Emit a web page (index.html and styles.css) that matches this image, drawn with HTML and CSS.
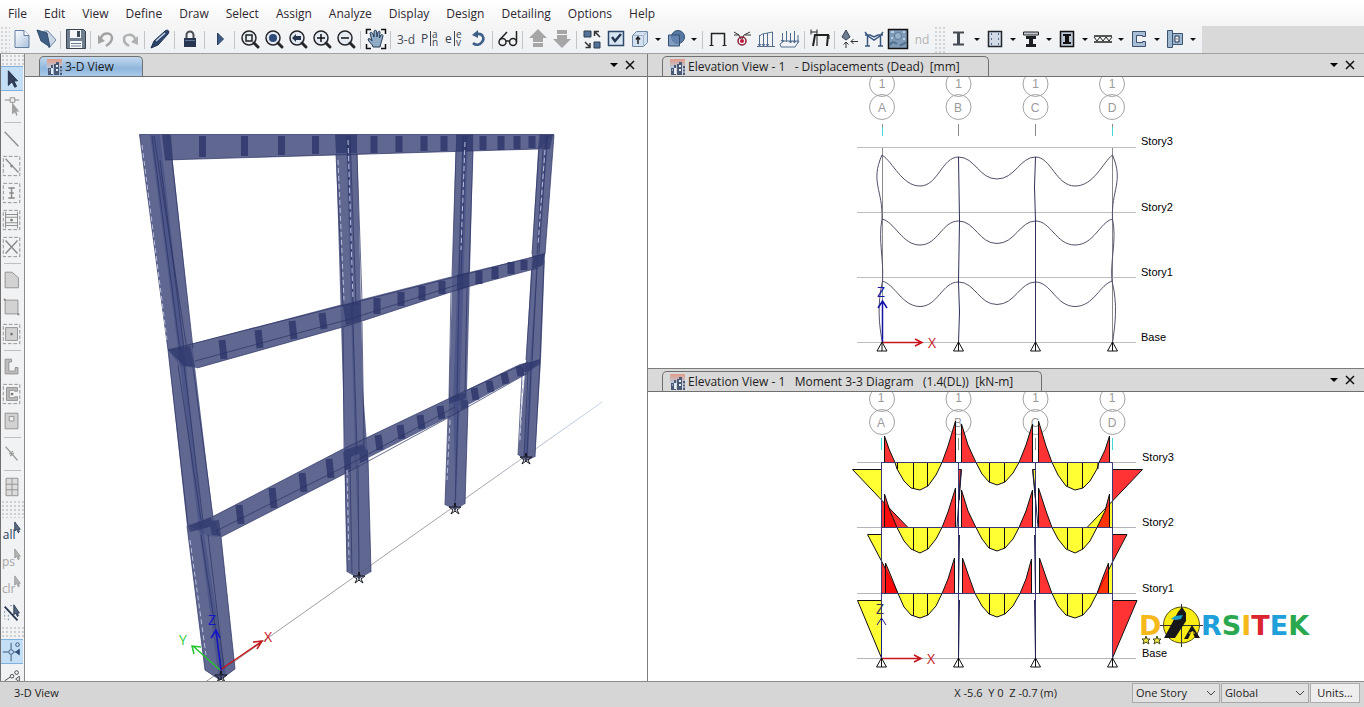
FILE: index.html
```html
<!DOCTYPE html>
<html lang="en">
<head>
<meta charset="utf-8">
<title>3-D View</title>
<link rel="stylesheet" href="styles.css">
</head>
<body>
<div class="app">
<nav class="menu" aria-label="Main menu">
  <button>File</button><button>Edit</button><button>View</button><button>Define</button><button>Draw</button><button>Select</button><button>Assign</button><button>Analyze</button><button>Display</button><button>Design</button><button>Detailing</button><button>Options</button><button>Help</button>
</nav>

<div class="toolbar-row">
<div class="toolbar" role="toolbar" aria-label="Tools">
  <span class="grip"></span>
  <button class="tool" aria-label="New"><svg viewBox="0 0 24 24"><path d="M5 3.500h9l5 5V20.500H5z" fill="url(#paper)" stroke="#64809f"/><path d="M14 3.500v5h5" fill="#fff" stroke="#64809f"/></svg></button>
  <button class="tool" aria-label="Open"><svg viewBox="0 0 24 24"><path d="M10 4l4 0 8 9-7 8z" fill="#c9d6e6" stroke="#7388a2"/><path d="M3 3l10 3 3 14-9-6z" fill="#3f5f86" stroke="#334c6e"/></svg></button>
  <i class="sep"></i>
  <button class="tool" aria-label="Save"><svg viewBox="0 0 24 24"><path d="M2.500 2.500h17l2 2v17h-19z" fill="#6f7f90" stroke="#39434f"/><path d="M6 3h11v8H6z" fill="#f5f7fa"/><path d="M13 4h3v6h-3z" fill="#3d4a58"/><path d="M6 14h12v7H6z" fill="#f5f7fa"/><path d="M7 16.500h10M7 19h10" stroke="#6f7f90"/></svg></button>
  <i class="sep"></i>
  <button class="tool" aria-label="Undo"><svg viewBox="0 0 24 24"><path d="M7 11C9 5 18 5 18 11c0 4-3 6-6 8" fill="none" stroke="#a3a3a3" stroke-width="2.500"/><path d="M4 8v9l7-3z" fill="#a3a3a3"/></svg></button>
  <button class="tool" aria-label="Redo"><svg viewBox="0 0 24 24"><path d="M17 12C15 6 6 7 6 12c0 4 2 5 5 7" fill="none" stroke="#b0b0b0" stroke-width="2.500"/><path d="M20 9v9l-7-3z" fill="#b0b0b0"/></svg></button>
  <i class="sep"></i>
  <button class="tool" aria-label="Refresh drawing"><svg viewBox="0 0 24 24"><path d="M3 21l3-7L17 4c3-2 5 0 3 3L10 18z" fill="#2c456b" stroke="#1e2f4b"/><path d="M8 14L17 6" stroke="#c6d6e8" stroke-width="1.500"/></svg></button>
  <i class="sep"></i>
  <button class="tool" aria-label="Lock model"><svg viewBox="0 0 24 24"><path d="M8.500 12V8a3.500 3.500 0 0 1 7 0v4" fill="none" stroke="#4b4f56" stroke-width="2"/><rect x="6" y="11" width="12" height="9" fill="#26364f"/><path d="M7 13.500h10" stroke="#62789a"/></svg></button>
  <i class="sep"></i>
  <button class="tool" aria-label="Run analysis"><svg viewBox="0 0 24 24"><path d="M9.500 6v12l6-6z" fill="#3c5a83" stroke="#2a3f60"/></svg></button>
  <i class="sep"></i>
  <button class="tool" aria-label="Rubber band zoom"><svg viewBox="0 0 24 24"><circle cx="11" cy="11" r="7" class="lens"/><path d="M16 16l4 4" class="handle"/><rect x="8" y="8" width="6" height="6" fill="none" stroke="#222" stroke-width="1.500"/></svg></button>
  <button class="tool" aria-label="Restore full view"><svg viewBox="0 0 24 24"><circle cx="11" cy="11" r="7" class="lens"/><path d="M16 16l4 4" class="handle"/><circle cx="11" cy="11" r="4" fill="#2d4b76"/></svg></button>
  <button class="tool" aria-label="Previous zoom"><svg viewBox="0 0 24 24"><circle cx="11" cy="11" r="7" class="lens"/><path d="M16 16l4 4" class="handle"/><path d="M6 11l4-4v2h5v4h-5v2z" fill="#26364f"/></svg></button>
  <button class="tool" aria-label="Zoom in"><svg viewBox="0 0 24 24"><circle cx="11" cy="11" r="7" class="lens"/><path d="M16 16l4 4" class="handle"/><path d="M7 11h8M11 7v8" stroke="#111" stroke-width="1.500"/></svg></button>
  <button class="tool" aria-label="Zoom out"><svg viewBox="0 0 24 24"><circle cx="11" cy="11" r="7" class="lens"/><path d="M16 16l4 4" class="handle"/><path d="M7 11h8" stroke="#111" stroke-width="1.500"/></svg></button>
  <i class="sep"></i>
  <button class="tool" aria-label="Pan"><svg viewBox="0 0 24 24"><path d="M2.500 7V2.500H7M17 2.500h4.500V7M21.500 17v4.500H17M7 21.500H2.500V17" fill="none" stroke="#111" stroke-width="1.500"/><path d="M9 20c0-3-5-5-5-8 1-1 3 0 4 2L6 6c1-1 2-1 3 1l1 3V4c1-1 2-1 2.500 0l.5 6 1-5c1-1 2-1 2 0l-.5 6 1.500-3c1-1 2 0 2 1l-2 7-1 4z" fill="#8eabc8" stroke="#293b52"/></svg></button>
  <i class="sep"></i>
  <button class="tool word">3-d</button>
  <button class="tool" aria-label="Plan view"><svg viewBox="0 0 24 24" class="glyph"><path d="M12.500 4v15"/><text x="3" y="16" font-size="12">P<tspan x="14" y="11" font-size="10">a</tspan><tspan x="14" y="19" font-size="10">n</tspan></text></svg></button>
  <button class="tool" aria-label="Elevation view"><svg viewBox="0 0 24 24" class="glyph"><path d="M12.500 4v15"/><text x="3" y="16" font-size="12">e<tspan x="14" y="11" font-size="10">e</tspan><tspan x="14" y="19" font-size="10">v</tspan></text></svg></button>
  <button class="tool" aria-label="Rotate"><svg viewBox="0 0 24 24"><path d="M11 7c6-1 8 5 5 8-2 3-6 4-9 1" fill="none" stroke="#3d5f88" stroke-width="2.500"/><path d="M12 3v8L6 8z" fill="#3d5f88"/></svg></button>
  <i class="sep"></i>
  <button class="tool" aria-label="Object view options"><svg viewBox="0 0 24 24" fill="none" stroke="#222" stroke-width="1.500"><circle cx="6.500" cy="15" r="3.500"/><circle cx="17" cy="15" r="3.500"/><path d="M10 14h4M3.500 13L11 5M20.500 15V4"/></svg></button>
  <i class="sep"></i>
  <button class="tool" aria-label="Move up"><svg viewBox="0 0 24 24" fill="#a6a6a6"><path d="M12 2l9 9H3zM7 11h10v4H7zM7 16h10v4H7z"/></svg></button>
  <button class="tool" aria-label="Move down"><svg viewBox="0 0 24 24" fill="#a6a6a6"><path d="M12 21l9-9H3zM7 8h10v4H7zM7 3h10v4H7z"/></svg></button>
  <i class="sep"></i>
  <button class="tool" aria-label="Shrink objects"><svg viewBox="0 0 24 24"><path d="M4 4h7v6H4zM14 15h6v6h-6z" fill="#537298" stroke="#2d3c52"/><path d="M20 10l-5-5M14.500 9V4.500H19M5 15l5 5M5.500 20.500H10V16" fill="none" stroke="#333" stroke-width="1.500"/></svg></button>
  <button class="tool" aria-label="Set display options"><svg viewBox="0 0 24 24"><rect x="4.500" y="4.500" width="15" height="14" fill="#d7e5f3" stroke="#2f4869" stroke-width="1.500"/><path d="M8 10l3 4 6-7" fill="none" stroke="#26364f" stroke-width="2.500"/></svg></button>
  <button class="tool" aria-label="Assign display"><svg viewBox="0 0 24 24"><path d="M4.500 8.500l4-4h11v11l-4 4h-11z" fill="#d3e0ef" stroke="#6e87a5"/><path d="M4.500 8.500h11v11M15.500 8.500l4-4" fill="none" stroke="#9fb3ca"/><path d="M10 17V10M8 12.500L10 10l2 2.500" fill="none" stroke="#222" stroke-width="1.500"/></svg></button>
  <button class="drop" aria-label="More display"></button>
  <button class="tool" aria-label="Object fill"><svg viewBox="0 0 24 24"><circle cx="14" cy="10" r="6.500" fill="#5879a3" stroke="#334f74"/><path d="M4.500 8h11v11h-11z" fill="#6687b0" stroke="#334f74" fill-opacity=".8"/></svg></button>
  <button class="drop" aria-label="More fill"></button>
  <i class="sep"></i>
  <button class="tool" aria-label="Undeformed shape"><svg viewBox="0 0 24 24" fill="none" stroke="#222"><path d="M5.500 18V6.500h13V18" stroke-width="1.500"/><path d="M3.500 18.500h4M16.500 18.500h4"/></svg></button>
  <button class="tool" aria-label="Joint reactions"><svg viewBox="0 0 24 24"><path d="M4 5l5 3 2 4M20 5l-6 3-2 4M4 8h5M15 8h6" fill="none" stroke="#333"/><circle cx="12" cy="14" r="4" fill="none" stroke="#8b1d34" stroke-width="1.500"/><circle cx="12" cy="14" r="2" fill="#c4163c"/></svg></button>
  <button class="tool" aria-label="Frame loads"><svg viewBox="0 0 24 24" fill="none" stroke="#526c8e"><path d="M3 19.500h18M5.500 8v11M9.500 7v12M13.500 6v13M18.500 5v14M5.500 9l3-2 5-1 5-1M4 17l1.500 2 1.500-2M8 17l1.500 2 1.500-2M12 17l1.500 2 1.500-2"/></svg></button>
  <button class="tool" aria-label="Shell loads"><svg viewBox="0 0 24 24" fill="none" stroke="#526c8e"><path d="M2 17l4-3h15l-4 6H3zM4.500 6v9M8.500 4v11M12.500 6v10M16.500 4v12M20 8v8M3 13l1.500 2L6 13M11 14l1.500 2 1.500-2M15 14l1.500 2 1.500-2"/></svg></button>
  <i class="sep"></i>
  <button class="tool" aria-label="Deformed shape"><svg viewBox="0 0 24 24" fill="none" stroke="#222"><path d="M5 19L7 8h13l-1 11" stroke-width="2"/><path d="M3 2.500v5M9 2.500v5M3 5h6M9 8v11M21 8v4"/></svg></button>
  <i class="sep"></i>
  <button class="tool" aria-label="Joint loads"><svg viewBox="0 0 24 24"><path d="M8 3l4 7-4 3-4-3z" fill="#6c7f94" stroke="#39434f"/><path d="M8 21v-6M5.500 17.500L8 15l2.500 2.500M20 14.500h-7M15.500 12L13 14.500l2.500 2.500" fill="none" stroke="#333"/></svg></button>
  <button class="tool" aria-label="Force diagrams"><svg viewBox="0 0 24 24" fill="none" stroke="#3a587f" stroke-width="1.500"><path d="M5.500 19V8M18.500 19V8M3 5l3 4 6 4 6-4 3-4M3 19h5M16 19h5M3 8h5l4 2 4-2h5"/></svg></button>
  <button class="tool" aria-label="Shell forces"><svg viewBox="0 0 24 24"><rect x="2.500" y="2.500" width="19" height="19" fill="#7f9ab6" stroke="#111" stroke-width="1.500"/><path d="M4 18c2-4 5-3 7-1M14 19c2-3 4-1 6-4" stroke="#50708f" stroke-width="2" fill="none"/><circle cx="12" cy="9" r="3.500" fill="#98b2cb" stroke="#5c7b99"/><path d="M5 5h3M17 5h2M5 11h2M17 12h2" stroke="#bdd0e2" stroke-width="2"/></svg></button>
  <button class="tool word off">nd</button>
  <span class="grip wide"></span>
  <button class="tool" aria-label="Steel frame design"><svg viewBox="0 0 24 24"><path d="M6 4.500h11v2h-4v10h4v2H6v-2h4v-10H6z" fill="#454b53"/></svg></button>
  <button class="drop" aria-label="More steel"></button>
  <button class="tool" aria-label="Concrete frame design"><svg viewBox="0 0 24 24"><rect x="5.500" y="4.500" width="13" height="15" fill="#d3dbe8" stroke="#22262d" stroke-width="1.500"/><path d="M8 7h1M15 7h1M8 17h1M15 17h1M8 12h1M15 12h1" stroke="#2d4b76" stroke-width="1.500"/></svg></button>
  <button class="drop" aria-label="More concrete"></button>
  <button class="tool" aria-label="Composite beam design"><svg viewBox="0 0 24 24"><path d="M4.500 5h15v3h-15z" fill="#c5ccd5" stroke="#222"/><path d="M7 9h10v3h-3v5h3v3H7v-3h3v-5H7z" fill="#1c1f24"/></svg></button>
  <button class="drop" aria-label="More composite beam"></button>
  <button class="tool" aria-label="Composite column design"><svg viewBox="0 0 24 24"><rect x="5.500" y="4.500" width="13" height="15" fill="#b9c5d4" stroke="#111" stroke-width="1.500"/><path d="M8 7h8v2h-2v6h2v2H8v-2h2V9H8z" fill="#111"/></svg></button>
  <button class="drop" aria-label="More composite column"></button>
  <button class="tool" aria-label="Steel joist design"><svg viewBox="0 0 24 24" fill="none" stroke="#222"><path d="M3 9h18M3 15h18" stroke-width="1.500"/><path d="M3 10l3 4 3-4 3 4 3-4 3 4 3-4"/></svg></button>
  <button class="drop" aria-label="More joist"></button>
  <button class="tool" aria-label="Shear wall design"><svg viewBox="0 0 24 24"><path d="M5.500 4.500h13v5h-3v-1h-6v7h6v-1h3v5h-13z" fill="#a9bed5" stroke="#3c5370"/></svg></button>
  <button class="drop" aria-label="More wall"></button>
  <button class="tool" aria-label="Concrete slab design"><svg viewBox="0 0 24 24"><path d="M4.500 3.500h5v17h-5z" fill="#9fb8d2" stroke="#3c5370"/><path d="M9.500 6.500h10v11h-10z" fill="#9fb8d2" stroke="#3c5370"/><path d="M12 9h4v6h-4z" fill="#eef3f9" stroke="#24354c"/><path d="M13.500 12h1" stroke="#111"/></svg></button>
  <button class="drop" aria-label="More slab"></button>
</div>
</div>

<div class="work">
<div class="side" role="toolbar" aria-label="Draw and select">
  <span class="hgrip"></span>
  <button class="stool on" aria-label="Select pointer"><svg viewBox="0 0 24 24"><path d="M8 3v16l4-4 3 6 2-1-3-6h4z" fill="#34415c" stroke="#1f2a40"/></svg></button>
  <button class="stool" aria-label="Reshape"><svg viewBox="0 0 24 24"><path d="M4 5.500h16" stroke="#a8a8a8" stroke-width="1.500"/><path d="M10 3h5v5h-5z" fill="#eee" stroke="#8c8c8c"/><path d="M12 8v13l3-2 2 4 1-1-1-4h3z" fill="#a2a2a2"/></svg></button>
  <i class="hsep"></i>
  <button class="stool" aria-label="Draw line"><svg viewBox="0 0 24 24"><path d="M4 4l15 16" stroke="#8f8f8f" stroke-width="1.500"/></svg></button>
  <button class="stool" aria-label="Quick draw line"><svg viewBox="0 0 24 24"><rect x="2.500" y="1.500" width="18" height="21" class="dash"/><path d="M5 4l14 15" stroke="#8f8f8f" stroke-width="1.500"/><circle cx="11.500" cy="12" r="1.500" fill="#888"/></svg></button>
  <button class="stool" aria-label="Quick draw columns"><svg viewBox="0 0 24 24"><rect x="2.500" y="1.500" width="18" height="21" class="dash"/><path d="M8 6.500h7M8 17.500h7M11.500 6v12M9 12h5" stroke="#888" stroke-width="1.500"/></svg></button>
  <button class="stool" aria-label="Quick draw beams"><svg viewBox="0 0 24 24"><rect x="2.500" y="1.500" width="18" height="21" class="dash"/><path d="M5 3v18M18 3v18M5 6h13M5 9h13M5 15h13M5 18h13" stroke="#888"/><circle cx="11.500" cy="12" r="1.500" fill="#777"/></svg></button>
  <button class="stool" aria-label="Quick draw braces"><svg viewBox="0 0 24 24"><rect x="2.500" y="1.500" width="18" height="21" class="dash"/><path d="M5 5l13 14M18 5L5 19" stroke="#888" stroke-width="1.500"/></svg></button>
  <i class="hsep"></i>
  <button class="stool" aria-label="Draw floor"><svg viewBox="0 0 24 24"><path d="M4.500 3.500H12l7 6v11H4.500z" fill="#d2d2d2" stroke="#8f8f8f"/></svg></button>
  <button class="stool" aria-label="Draw rectangular floor"><svg viewBox="0 0 24 24"><path d="M4.500 4.500h14v15h-14z" fill="#d2d2d2" stroke="#8f8f8f"/><path d="M3 3h2v2H3zM18 19h2v2h-2z" fill="#777"/></svg></button>
  <button class="stool" aria-label="Quick draw floor"><svg viewBox="0 0 24 24"><rect x="2.500" y="1.500" width="18" height="21" class="dash"/><path d="M5 5h13v14H5z" fill="#d2d2d2" stroke="#8f8f8f"/><circle cx="11.500" cy="12" r="1.500" fill="#777"/></svg></button>
  <i class="hsep"></i>
  <button class="stool" aria-label="Draw walls"><svg viewBox="0 0 24 24"><path d="M4.500 3.500h7v3h-3v10h7v-4h3v7h-14z" fill="#bdbdbd" stroke="#8f8f8f"/></svg></button>
  <button class="stool" aria-label="Quick draw walls"><svg viewBox="0 0 24 24"><rect x="2.500" y="1.500" width="18" height="21" class="dash"/><path d="M6 5h12v4h-3V8H9v8h6v-1h3v4H6z" fill="#bdbdbd" stroke="#8f8f8f"/><circle cx="12" cy="12" r="1.500" fill="#777"/></svg></button>
  <button class="stool" aria-label="Draw wall openings"><svg viewBox="0 0 24 24"><path d="M4.500 3.500h14v17h-14z" fill="#d2d2d2" stroke="#8f8f8f"/><path d="M9 7h5v5H9z" fill="#eee" stroke="#8f8f8f"/></svg></button>
  <i class="hsep"></i>
  <button class="stool" aria-label="Draw links"><svg viewBox="0 0 24 24"><path d="M5 4l13 15M9 12l4-3M10 14l4-3" stroke="#9a9a9a" stroke-width="1.500" fill="none"/></svg></button>
  <i class="hsep"></i>
  <button class="stool" aria-label="Draw grid"><svg viewBox="0 0 24 24"><path d="M5.500 2.500h13v19h-13zM5.500 9h13M5.500 15h13M12 3v18" fill="#dcdcdc" stroke="#8f8f8f"/></svg></button>
  <span class="hgrip tall"></span>
  <button class="stool" aria-label="Select all"><svg viewBox="0 0 24 24"><text x="2" y="20" font-size="13" fill="#26415f">all</text><path d="M15 1v10l2-2 2 4 1-1-1-3h2z" fill="#5b6b80" stroke="#33435a"/></svg></button>
  <button class="stool" aria-label="Previous selection"><svg viewBox="0 0 24 24"><text x="1" y="20" font-size="13" fill="#a5a5a5">ps</text><path d="M15 1v10l2-2 2 4 1-1-1-3h2z" fill="#b4b4b4" stroke="#999"/></svg></button>
  <button class="stool" aria-label="Clear selection"><svg viewBox="0 0 24 24"><text x="1" y="20" font-size="13" fill="#a5a5a5">clr</text><path d="M15 1v10l2-2 2 4 1-1-1-3h2z" fill="#b4b4b4" stroke="#999"/></svg></button>
  <button class="stool" aria-label="Intersecting line selection"><svg viewBox="0 0 24 24"><path d="M4 5l14 15" stroke="#26364f" stroke-width="2"/><path d="M4 10v9M8 14v6M10 4h4" stroke="#6b8bb3" stroke-dasharray="2 2"/><path d="M14 3v11l2-2 2 4 1-1-1-3h2z" fill="#52647c" stroke="#26364f"/></svg></button>
  <span class="hgrip short"></span>
  <button class="stool on" aria-label="Snap to joints"><svg viewBox="0 0 24 24" fill="none" stroke="#2f4f77"><path d="M11 2v7M11 15v7M2 12h6M14 12h3"/><circle cx="11" cy="12" r="2.500"/><circle cx="18" cy="4" r="2"/><path d="M20 9v6l-4-3z" fill="#2f4f77"/></svg></button>
  <button class="stool" aria-label="Snap to ends"><svg viewBox="0 0 24 24" fill="none" stroke="#444"><circle cx="17" cy="5" r="2"/><circle cx="12" cy="9" r="2"/><path d="M4 14l6-4M20 9v6l-4-3z"/></svg></button>
</div>

<main class="panes">
<section class="pane main-view">
  <header class="strip">
    <h2 class="tab active"><svg class="tabicon" viewBox="0 0 16 16"><use href="#tabmark"/></svg>3-D View</h2>
    <span class="ctl"><button aria-label="Window list"><svg viewBox="0 0 16 16"><path d="M4 6h8l-4 4z"/></svg></button><button aria-label="Close"><svg viewBox="0 0 16 16"><path d="M4 4l8 8M12 4l-8 8" stroke="#111" stroke-width="1.500"/></svg></button></span>
  </header>
  <svg class="view" viewBox="25 77 622 604" role="img" aria-label="3-D frame model">
    <defs>
      <linearGradient id="paper" x1="0" y1="0" x2="1" y2="1"><stop offset="0" stop-color="#fff"/><stop offset="1" stop-color="#a9c0dc"/></linearGradient>
      <linearGradient id="fade" gradientUnits="userSpaceOnUse" x1="220" y1="670" x2="602" y2="402"><stop offset="0" stop-color="#9a9a9a"/><stop offset=".7" stop-color="#a6a6b4"/><stop offset="1" stop-color="#c3d8f0"/></linearGradient>
      <linearGradient id="sky" x1="0" y1="0" x2="0" y2="1"><stop offset="0" stop-color="#e39b86"/><stop offset="1" stop-color="#b9cbe0"/></linearGradient>
      <g id="tabmark"><path d="M0 0h15v9H0z" fill="url(#sky)"/><path d="M1 9h3V6h2v10H1zM7 5h2V3h3v13H7zM13 7h2v9h-2z" fill="#4a5a76"/><path d="M4 9h2v6H4zM9 6h2v2H9zM9 10h2v2H9z" fill="#e6edf5"/><path d="M2 11h1M13 10h2M13 13h2" stroke="#dfe8f2"/></g>
      <path id="star" d="M0-5L1-1 6-1 2 2 4 6 0 3-4 6-2 2-6-1-1-1zM0-5v9" fill="none" stroke="#15151f"/>
      <g id="pin"><path d="M0 0l-5 9h10zM0 0v9" fill="none" stroke="#111"/></g>
    </defs>
    <path d="M204 683L602 402" stroke="url(#fade)" fill="none"/>
    <g class="steel">
      <path d="M139.500 134.500H170L193 350 213 517 221 536 235 669 220 680 205 670 187 526 168 350z"/>
      <path d="M335.500 134.500H357L363 390 368 457 371 572 359 579 347 572 343 390z"/>
      <path d="M456 134.500H473.500L467 390 468 407 465 504 455 510 445 505 449 398z"/>
      <path d="M539 134.500H554L545 254 541 360 535 457 526 461 518 455 526 360 532 253z"/>
      <path d="M162 134.500H554L538 149 165 160z"/>
      <path d="M168 350L343 304 457 275 545 254 541 267 463 288 350 325 197 368 180 366z"/>
      <path d="M188 525L212 517 343 449 450 398 520 364 540 360 528 373 468 405 457 413 368 458 352 470 221 537 208 536z"/>
    </g>
    <g class="flange">
      <path d="M150 135L178 348 198 521 219 680 226 674 202 521 184 348 160 135z"/>
      <path d="M346 135h4L355 390 360 578 355 450z"/>
      <path d="M463 135h5L460 390 456 508 453 400z"/>
      <path d="M545 135h4L538 254 528 458 524 456z"/>
    </g>
    <g class="joint">
      <path d="M168 350L190 346 195 367 184 366zM188 526l23-9 2 9-23 6zM209 521l10-1 2 16-9-1z"/>
      <path d="M344 450l20-6 2 7-21 8zM359 448l9 2v10l-8 3zM343 452h8v16l-6 3zM449 398l17-6v6l-17 6zM460 398l8 3v6l-7 3zM523 364l17-5v5l-12 8h-6zM343 305l18-4v20l-15 4zM457 275l12-3v15l-12 4zM533 256l12-3-2 12-11 4z"/>
      <path d="M335 135h22v18h-21zM456 135h17v16h-17zM540 135h13l-3 14h-12zM162 135h9l2 25h-8z"/>
    </g>
    <g class="web"><path d="M202.500 136v21M244.500 136v20M281.500 136v19M315.500 136v18M374 136v17M399 136v16M424 136v15M444 136v15M483 136v14M501 136v14M517 136v13M532 136v12"/><path d="M222 340l2 19M258 330l2 18M292 321l2 18M322 313l2 16M377 298v16M401 292v14M422 286v14M442 281v13M479 271v13M495 267v12M511 262v12M524 260v10"/><path d="M239 505l2 19M272 488l2 20M302 473l2 19M329 459l2 19M378 435l2 15M400 425l2 14M420 415l2 14M440 406l2 13M474 388l2 12M489 381l2 11M504 373l2 11M519 366l2 10"/></g>
    <g class="edge">
      <path d="M139.500 134.500H554M165 160L538 149M168 350L545 254M197 368L350 325 463 288 538 268M195 361L350 319 463 283M212 517L343 449 450 398 528 362M221 537L352 470 457 413 528 373M216 531L350 464 455 407"/>
      <path d="M139.500 134.500L168 350M172 160L193 348M154 136L187 350M152 136L180 350M160 160L184 348M168 350L188 526M193 367L213 517M178 365L201 520M184 365L203 521M187 526L205 670 220 680 235 669 221 537M201 535L222 672M208 535L224 669"/>
      <path d="M336 154L343 307M357 154L362 300M347 136L353 305M350 136L356 305M343 328L344 448M362 322L364 444M353 325L357 448M345 466L347 572M368 458L371 572M358 465L359 575M350 467L352 573"/>
      <path d="M456 151L452 276M473 151L469 272M463 136L459 276M466 136L461 276M451 292L449 398M467 288L465 392M459 290L457 398M448 416L445 505M468 405L465 504M458 410L455 505"/>
      <path d="M539 149L532 254M554 135L545 254M547 136L539 254M543 149L537 254M532 270L526 360M544 260L540 360M537 268L532 360M522 376L518 455M540 360L535 457M531 370L527 456M528 372L524 456"/>
    </g>
    <g class="hidden"><path d="M142 145L167 340M190 540L206 655M338 160L344 300M348 140L353 300M347 470L349 560M465 142L461 250M545 150L538 245M450 420L447 480M523 380L520 440"/></g>
    <use href="#star" x="359" y="577"/><use href="#star" x="455" y="508"/><use href="#star" x="526" y="458"/><use href="#star" x="221" y="676"/>
    <g fill="none" stroke-width="1.500">
      <path d="M220 670L261 642M253 642L262 641 257 649" stroke="#c4161c"/>
      <path d="M220 670L193 646M194 654L192 646 201 647" stroke="#22c32e"/>
      <path d="M221 670L216 631M211 638L216 630 220 638" stroke="#1414c8"/>
    </g>
    <text x="264" y="642" class="axis" fill="#c4161c">X</text><text x="179" y="645" class="axis" fill="#2fce3c">Y</text><text x="208" y="625" class="axis" fill="#1414c8">Z</text>
  </svg>
</section>

<div class="column">
<section class="pane">
  <header class="strip">
    <h2 class="tab"><svg class="tabicon" viewBox="0 0 16 16"><use href="#tabmark"/></svg>Elevation View - 1   - Displacements (Dead)  [mm]</h2>
    <span class="ctl"><button aria-label="Window list"><svg viewBox="0 0 16 16"><path d="M4 6h8l-4 4z"/></svg></button><button aria-label="Close"><svg viewBox="0 0 16 16"><path d="M4 4l8 8M12 4l-8 8" stroke="#111" stroke-width="1.500"/></svg></button></span>
  </header>
  <svg class="view" viewBox="648 77 716 291" role="img" aria-label="Displacements elevation">
    <g class="bubble"><circle cx="882" cy="84" r="12.500"/><circle cx="958.500" cy="84" r="12.500"/><circle cx="1035.500" cy="84" r="12.500"/><circle cx="1112" cy="84" r="12.500"/><circle cx="882" cy="107" r="12.500"/><circle cx="958.500" cy="107" r="12.500"/><circle cx="1035.500" cy="107" r="12.500"/><circle cx="1112" cy="107" r="12.500"/></g>
    <g class="mark"><text x="882" y="88">1</text><text x="958.500" y="88">1</text><text x="1035.500" y="88">1</text><text x="1112" y="88">1</text><text x="882" y="112">A</text><text x="958" y="112">B</text><text x="1035" y="112">C</text><text x="1112" y="112">D</text></g>
    <path d="M958.500 124v12M1035.500 124v12M882.500 124v3M1112.500 124v3M882.500 147v196M1112.500 147v196" stroke="#8a8a8a"/><path d="M882.500 127v9M1112.500 127v9" stroke="#3fd6d6"/>
    <path d="M857 147.500h279M857 212.500h279M857 277.500h279M857 342.500h279" stroke="#bdbdb9"/>
    <g fill="none" stroke="#50506a">
      <path d="M882 155C893 162 902 186 920 186S942 157 958.500 157 979 179 997 179 1020 157 1035.500 157 1056 186 1075 186 1103 162 1112.500 155"/>
      <path d="M882 219C895 222 902 245 920 245S942 221 958.500 221 979 243.500 997 243.500 1020 221 1035.500 221 1056 245 1075 245 1100 222 1112.500 219"/>
      <path d="M882 281C895 284 902 306.500 920 306.500S942 282 958.500 282 979 304.500 997 304.500 1020 282 1035.500 282 1056 306.500 1075 306.500 1100 284 1112.500 281"/>
      <path d="M882 155C870 182 883 190 882 219 878 240 884 260 882.500 281 877 305 879 325 882.500 343M1112.500 155C1124 182 1111 190 1112.500 219 1117 240 1110 260 1112 281 1118 305 1115 325 1112.500 343"/>
      <path d="M958.500 157l1 64-1 61 1 30-1 31M1035.500 157l-1 30 1 34v122" stroke="#30305c"/>
    </g>
    <path d="M882.500 342V302M878 308l4.500-7 4.500 7" fill="none" stroke="#1414a8" stroke-width="1.500"/><path d="M882 342.500h40M915 339l7 3.500-7 3.500" fill="none" stroke="#c4161c" stroke-width="1.500"/>
    <text x="877" y="297" class="axis" fill="#1414a8">Z</text><text x="928" y="348" class="axis" fill="#c4161c">X</text>
    <use href="#pin" x="882" y="342"/><use href="#pin" x="958.500" y="342"/><use href="#pin" x="1035.500" y="342"/><use href="#pin" x="1112.500" y="342"/>
    <g class="story"><text x="1141" y="145">Story3</text><text x="1141" y="211">Story2</text><text x="1141" y="276">Story1</text><text x="1141" y="341">Base</text></g>
  </svg>
</section>

<section class="pane">
  <header class="strip">
    <h2 class="tab"><svg class="tabicon" viewBox="0 0 16 16"><use href="#tabmark"/></svg>Elevation View - 1   Moment 3-3 Diagram   (1.4(DL))  [kN-m]</h2>
    <span class="ctl"><button aria-label="Window list"><svg viewBox="0 0 16 16"><path d="M4 6h8l-4 4z"/></svg></button><button aria-label="Close"><svg viewBox="0 0 16 16"><path d="M4 4l8 8M12 4l-8 8" stroke="#111" stroke-width="1.500"/></svg></button></span>
  </header>
  <svg class="view" viewBox="648 392 716 289" role="img" aria-label="Moment diagram elevation">
    <g class="bubble"><circle cx="882" cy="399" r="12.500"/><circle cx="958.500" cy="399" r="12.500"/><circle cx="1035.500" cy="399" r="12.500"/><circle cx="1112.500" cy="399" r="12.500"/><circle cx="882" cy="422" r="12.500"/><circle cx="958.500" cy="422" r="12.500"/><circle cx="1035.500" cy="422" r="12.500"/><circle cx="1112.500" cy="422" r="12.500"/></g>
    <g class="mark"><text x="881" y="402">1</text><text x="958.500" y="402">1</text><text x="1035.500" y="402">1</text><text x="1112" y="402">1</text><text x="881" y="427">A</text><text x="958" y="427">B</text><text x="1035" y="427">C</text><text x="1112" y="427">D</text></g>
    <path d="M958.500 438v12M1035.500 438v12" stroke="#8a8a8a"/><path d="M881.500 438v12M1112.500 438v12" stroke="#3fd6d6"/>
    <path d="M857 462.500h279M857 527.500h279M857 593.500h279M857 658.500h279" stroke="#b4b4bb"/>
    <g class="moment">
      <path class="pos" d="M852.500 469.500h29V500zM867.500 534.500h14V561zM857.500 600.500h24V658zM1112.500 501L1087 527.500h25.500zM1112.500 562L1097 593.500h15.500zM1032.500 469.500h3v30z"/>
      <path class="neg" d="M1112.500 469.500h30L1112.500 501zM1112.500 534.500h14.500L1112.500 562zM1112.500 600.500h24.500L1112.500 658zM881.500 500L908 527.500H881.500zM881.500 561L898 593.500H881.500zM958.500 469.500h3L959 500z"/>
      <g>
        <path class="pos" d="M895 462.500L897 469 904 481 911 488 920 490 928 486 936 475 942 462.500zM976 462.500L982 474 989 482 997 485 1005 482 1013 473 1019 462.500zM1052 462.500L1058 475 1066 486 1075 490 1083 488 1090 481 1097 469 1099 462.500z"/>
        <path class="neg" d="M884.500 462.500V436L889 449 895 462.500zM942 462.500L948 446 955.500 421V462.500zM961.500 462.500V424L968 445 976 462.500zM1019 462.500L1026 445 1032.500 424V462.500zM1038.500 462.500V421L1046 446 1052 462.500zM1099 462.500L1105 450 1109.500 436V462.500z"/>
        <path d="M897.500 462v7M913.500 462v27M927.500 462v24M989.500 462v20M1004.500 462v20M1067.500 462v24M1082.500 462v26M1098 462v7"/>
      </g>
      <g>
        <path class="pos" d="M897 527.500L904 541 911 549 920 553 928 549 936 539 942 527.500zM976 527.500L982 539 989 548 997 551 1005 548 1013 539 1019 527.500zM1052 527.500L1058 539 1066 549 1075 553 1083 549 1090 541 1097 527.500z"/>
        <path class="neg" d="M884.500 527.500V494L890 511 897 527.500zM942 527.500L948 512 955.500 488V527.500zM961.500 527.500V490L968 511 976 527.500zM1019 527.500L1026 511 1032.500 490V527.500zM1038.500 527.500V488L1046 511 1052 527.500zM1097 527.500L1105 511 1109.500 494V527.500z"/>
        <path d="M913.500 527v23M927.500 527v22M989.500 527v21M1004.500 527v21M1067.500 527v22M1082.500 527v22"/>
      </g>
      <g>
        <path class="pos" d="M898 593.500L904 607 911 615 920 618 928 615 936 606 942 593.500zM975 593.500L982 606 989 614 997 617 1005 614 1013 606 1020 593.500zM1052 593.500L1058 606 1066 615 1075 618 1083 615 1090 607 1097 593.500z"/>
        <path class="neg" d="M885.500 593.500V563L891 576 898 593.500zM942 593.500L948 579 954.500 558V593.500zM962.500 593.500V558L968 574 975 593.500zM1020 593.500L1026 579 1031.500 559V593.500zM1039.500 593.500V558L1046 577 1052 593.500zM1097 593.500L1103 577 1108.500 563V593.500z"/>
        <path d="M913.500 593v23M927.500 593v22M989.500 593v21M1004.500 593v21M1067.500 593v22M1082.500 593v22"/>
      </g>
    </g>
    <path d="M881.500 462.500H1112.500V658M881.500 527.500H1112.500M881.500 593.500H1112.500M881.500 462V658M958.500 462V658M1035.500 462V658" fill="none" stroke="#3b3b74"/>
    <path d="M961 470L957 527M1033 470L1038 527M959.500 600l-1 58M1034.500 600l1 58M959.500 535l-1 58M1034.500 535l1 58" stroke="#20204c" fill="none"/>
    <path d="M881.500 658V619M877 625l4.500-7 4.500 7" fill="none" stroke="#1d1d88"/><path d="M882 658.500h39M914 655l7 3.500-7 3.500" fill="none" stroke="#c4161c" stroke-width="1.500"/>
    <text x="876" y="614" class="axis" fill="#33334f">Z</text><text x="927" y="664" class="axis" fill="#c4161c">X</text>
    <use href="#pin" x="881.500" y="658"/><use href="#pin" x="958.500" y="658"/><use href="#pin" x="1035.500" y="658"/><use href="#pin" x="1112.500" y="658"/>
    <g class="story"><text x="1142" y="461">Story3</text><text x="1142" y="526">Story2</text><text x="1142" y="592">Story1</text><text x="1142" y="657">Base</text></g>
    <g class="logo">
      <text x="1139" y="635" fill="#f6b91c">D</text>
      <text x="1201" y="635"><tspan fill="#20a0da">R</tspan><tspan fill="#2aa84f">S</tspan><tspan fill="#f6b91c">I</tspan><tspan fill="#dc2430">T</tspan><tspan fill="#20a0da">E</tspan><tspan fill="#2aa84f">K</tspan></text>
      <circle cx="1181.500" cy="625" r="18" fill="#f8ec12" stroke="#55521a"/>
      <path d="M1181.500 604v43M1160 625.500h43" stroke="#333"/>
      <path d="M1164 638L1178 612 1182 607 1186 613V621L1175 638z" fill="#17171a"/>
      <path d="M1184 639L1192 625 1200 638H1195L1192 631 1188 639z" fill="#17171a"/>
      <path d="M1189 633h6M1190 638l3-7" stroke="#f8ec12"/>
      <path d="M1171 619l4-3 8-1-2 4-5 1z" fill="#1a9cc4"/>
      <path d="M1146 636l1 3h3l-2 2 1 3-3-2-3 2 1-3-2-2h3zM1157 636l1 3h3l-2 2 1 3-3-2-3 2 1-3-2-2h3z" fill="#f5e94a" stroke="#444a16"/>
    </g>
  </svg>
</section>
</div>
</main>
</div>

<footer class="status">
  <span class="where">3-D View</span>
  <span class="coords">X -5.6  Y 0  Z -0.7 (m)</span>
  <label class="pick"><select aria-label="Story mode"><option>One Story</option></select><svg viewBox="0 0 10 6"><path d="M1 1l4 4 4-4"/></svg></label>
  <label class="pick"><select aria-label="Coordinate system"><option>Global</option></select><svg viewBox="0 0 10 6"><path d="M1 1l4 4 4-4"/></svg></label>
  <button class="units">Units...</button>
</footer>
</div>
</body>
</html>
```
FILE: styles.css
```css
* { box-sizing: border-box; }
body { margin: 0; font: 12px/16px "Open Sans", "Noto Sans", sans-serif; color: #1d1d22; background: #d9d9d9; }
button { margin: 0; padding: 0; border: 0; background: none; font: inherit; color: inherit; }
.app { display: flex; flex-direction: column; height: 100vh; overflow: hidden; }

.menu { display: flex; gap: 17px; height: 26px; padding: 2px 8px 0; background: linear-gradient(#fff, #f5f5f5); flex: none; color: #2e2630; }

.toolbar-row { display: flex; flex: none; background: #d9d9d9; border-bottom: 1px solid #a0a0a0; }
.toolbar { display: flex; align-items: center; height: 27px; padding-right: 3px; background: linear-gradient(#f5f5f5, #eef1f5); }
.tool, .stool { display: flex; align-items: center; justify-content: center; width: 24px; flex: none; }
.tool { height: 26px; align-items: flex-start; }
.tool svg, .stool svg { width: 24px; height: 24px; display: block; }
.stool svg text, .glyph text { font-family: "Open Sans", sans-serif; }
.word { font-size: 12px; line-height: 25px; color: #444a55; }
.off { color: #b4b4b4; }
.glyph { fill: #39414f; stroke: none; }
.glyph path { stroke: #39414f; }
.lens { fill: #e6ecf3; stroke: #26262a; stroke-width: 1.5px; }
.handle { stroke: #26262a; stroke-width: 3px; stroke-linecap: round; }
.sep { width: 1px; height: 18px; margin: 0 3px 0 2px; background: #c4c4c4; flex: none; }
.grip { width: 10px; height: 27px; flex: none; background: radial-gradient(circle, #d4d4d4 1px, transparent 1px) 0 0 / 4px 4px; }
.grip.wide { width: 13px; }
.drop { width: 12px; height: 24px; display: flex; align-items: center; justify-content: center; flex: none; }
.drop::before { content: ""; border: 3px solid transparent; border-top-color: #111; border-bottom: 0; }

.work { display: flex; flex: 1; min-height: 0; }
.side { width: 25px; flex: none; display: flex; flex-direction: column; overflow: hidden; background: #f1f2f3; border-left: 1px solid #707070; border-right: 1px solid #8a8a8a; }
.stool { height: 27px; width: 22px; }
.stool svg { width: 22px; height: 22px; }
.stool.on { height: 25px; margin: 1px 0; background: #c3def5; border: solid #7fb0dc; border-width: 1px 0; }
.hsep { height: 1px; margin: 3px 3px 2px; background: #bfbfbf; flex: none; }
.hgrip { height: 11px; flex: none; background: radial-gradient(circle, #cfcfcf 1px, transparent 1px) 0 0 / 4px 4px; }
.hgrip.tall { height: 18px; }
.hgrip.short { height: 12px; }
.dash { fill: none; stroke: #8d8d8d; stroke-dasharray: 4 2; }

.panes { flex: 1; min-width: 0; display: grid; grid-template-columns: 622fr 717fr; background: #fff; }
.column { display: grid; grid-template-rows: 314fr 313fr; min-height: 0; min-width: 0; border-left: 1px solid #7c7c7c; }
.pane { display: flex; flex-direction: column; min-height: 0; min-width: 0; background: #fff; }
.column .pane + .pane { border-top: 1px solid #7c7c7c; }
.strip { display: flex; justify-content: space-between; align-items: flex-end; height: 23px; padding: 0 6px 0 14px; flex: none; background: #d9d9d9; border-bottom: 1px solid #707070; }
.main-view .strip { padding-right: 9px; }
.tab { display: flex; align-items: center; gap: 2px; height: 20px; margin: 0; padding: 0 28px 0 7px; border: 1px solid #707070; border-bottom: 0; border-radius: 5px 5px 0 0; font-size: 12px; line-height: 16px; font-weight: 400; white-space: pre; }
.tab.active { background: linear-gradient(#c3d9ee, #8fb6dd 60%, #a9caea); }
.tabicon { width: 16px; height: 16px; }
.ctl { display: flex; align-self: center; }
.ctl button, .ctl svg { width: 16px; height: 16px; display: block; }
.view { display: block; width: 100%; flex: 1; min-height: 0; }

.steel path { fill: #4f5885; fill-opacity: .9; }
.flange path { fill: #353f7c; fill-opacity: .4; }
.joint path { fill: #2b3468; fill-opacity: .65; }
.web path { fill: none; stroke: #2f376c; stroke-opacity: .85; stroke-width: 7px; }
.edge path { fill: none; stroke: #2b3264; stroke-opacity: .7; }
.hidden path { fill: none; stroke: #b9bedb; stroke-dasharray: 5 3; }
.axis { font: 14px "Open Sans", sans-serif; }
.bubble circle { fill: none; stroke: #a3a3a3; }
.mark text { font: 12px "Liberation Sans", Arial, sans-serif; fill: #9a9a9a; text-anchor: middle; }
.story text { font: 11px "Liberation Sans", Arial, sans-serif; fill: #000; }
.moment path { fill: none; stroke: #111; }
.moment .pos { fill: #ff0; fill-opacity: .8; }
.moment .neg { fill: #f00; fill-opacity: .8; }
.logo text { font: bold 27px "DejaVu Sans", sans-serif; }

.status { display: flex; align-items: flex-start; height: 26px; flex: none; padding: 1px 4px 0 14px; background: #d6d6d6; border-top: 1px solid #8a8a8a; font-size: 11px; line-height: 20px; }
.where { flex: 1; }
.coords { white-space: pre; margin-right: 75px; }
.pick { position: relative; width: 88px; height: 20px; margin-right: 1px; }
.pick select { appearance: none; width: 100%; height: 20px; padding: 0 3px; border: 1px solid #a8a8a8; border-radius: 0; background: #e1e1e1; font: inherit; line-height: 18px; color: inherit; }
.pick svg { position: absolute; right: 4px; top: 7px; width: 10px; height: 6px; fill: none; stroke: #444; pointer-events: none; }
.units { width: 50px; height: 20px; border: 1px solid #adadad; background: #eee; line-height: 18px; }
```
